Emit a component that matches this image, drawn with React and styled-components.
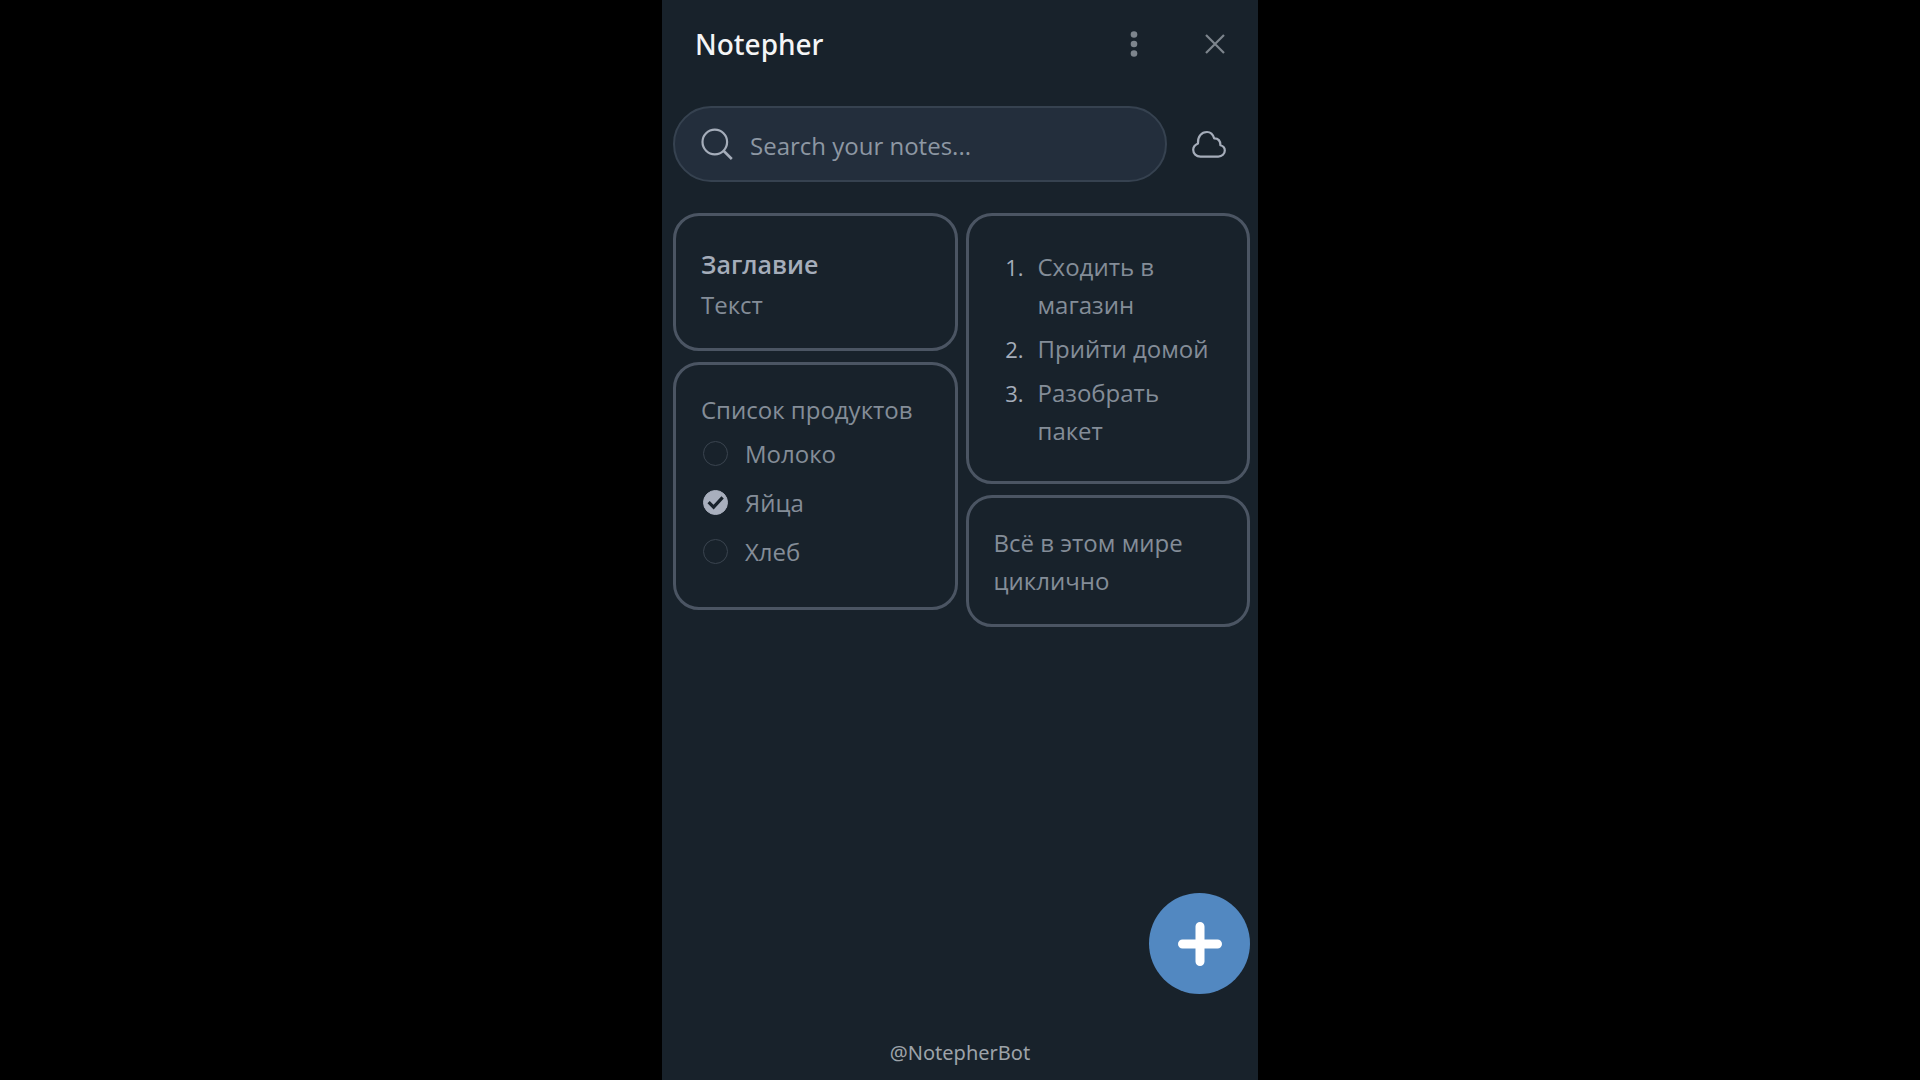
import { useState } from 'react';
import styled, { createGlobalStyle } from 'styled-components';

const GlobalStyle = createGlobalStyle`
  * {
    box-sizing: border-box;
  }

  body {
    margin: 0;
    background: #000;
    font-family: "Open Sans", "Noto Sans", sans-serif;
  }

  button {
    display: flex;
    justify-content: center;
    align-items: center;
    border: none;
    padding: 0;
    background: none;
    cursor: pointer;
  }
`;

const Panel = styled.div`
  display: flex;
  flex-direction: column;
  width: 100%;
  max-width: 596px;
  min-height: 100vh;
  margin: 0 auto;
  background: #18222b;
`;

const Header = styled.header`
  display: flex;
  align-items: center;
  height: 88px;
  padding: 0 21px 0 33px;
`;

const Title = styled.h1`
  flex: 1;
  margin: 0;
  font-family: "Noto Sans", sans-serif;
  font-size: 28px;
  font-weight: 500;
  color: #f4f5f6;
`;

const HeaderButton = styled.button`
  width: 44px;
  height: 44px;
  color: #7d858d;
  margin-left: ${(props) => (props.$spaced ? '37px' : '0')};
`;

const SearchRow = styled.div`
  display: flex;
  align-items: center;
  padding: 18px 27px 0 11px;
`;

const SearchBox = styled.label`
  display: flex;
  flex: 1;
  align-items: center;
  gap: 17px;
  height: 76px;
  padding: 0 26px;
  border: 2px solid #364250;
  border-radius: 38px;
  background: #232e3c;
  color: #a5adba;
`;

const SearchInput = styled.input`
  flex: 1;
  min-width: 0;
  padding: 2px 0 0;
  border: none;
  outline: none;
  background: none;
  font-family: inherit;
  font-size: 24px;
  color: #d5d9e0;

  &::placeholder {
    color: #8d97a3;
    opacity: 1;
  }
`;

const CloudButton = styled.button`
  width: 44px;
  height: 44px;
  margin-left: 20px;
  color: #a5adba;
`;

const Notes = styled.main`
  display: grid;
  grid-template-columns: 1fr 1fr;
  align-items: start;
  gap: 8px;
  padding: 31px 8px 0 11px;
`;

const Column = styled.div`
  display: flex;
  flex-direction: column;
  gap: 11px;
`;

const Card = styled.article`
  padding: 26px 25px 24px;
  border: 3px solid #4b5563;
  border-radius: 26px;
  font-size: 24px;
  line-height: 38px;
  color: #848d98;
`;

const CardTitle = styled.h2`
  margin: 0;
  font-size: 25px;
  font-weight: 600;
  line-height: 44px;
  color: #a5adba;
`;

const Text = styled.p`
  margin: 0;
`;

const Steps = styled.ol`
  display: flex;
  flex-direction: column;
  gap: 6px;
  margin: 0;
  padding: 6px 0 7px;
  list-style: none;
  counter-reset: step;
`;

const Step = styled.li`
  display: grid;
  grid-template-columns: 30px 1fr;
  column-gap: 14px;
  counter-increment: step;

  &::before {
    content: counter(step) ".";
    text-align: right;
    font-size: 22px;
    color: #a5adba;
  }
`;

const Checks = styled.ul`
  margin: 0 0 7px;
  padding: 0;
  list-style: none;
`;

const CheckLabel = styled.label`
  display: flex;
  align-items: center;
  gap: 17px;
  height: 49px;
  padding-left: 2px;
`;

const CheckMark = styled.span`
  display: grid;

  > * {
    grid-area: 1 / 1;
  }

  svg {
    pointer-events: none;
  }
`;

const Checkbox = styled.input`
  appearance: none;
  width: 25px;
  height: 25px;
  margin: 0;
  border: 1px solid #3a444f;
  border-radius: 50%;

  &:checked {
    border-color: #a8afbd;
    background: #a8afbd;
  }
`;

const AddButton = styled.button`
  align-self: flex-end;
  width: 101px;
  height: 101px;
  margin: auto 8px 0 0;

  && {
    border-radius: 50%;
    background: #5288c1;
  }
`;

const Footer = styled.footer`
  display: flex;
  justify-content: center;
  padding: 45px 0 13px;
  font-family: "Noto Sans", sans-serif;
  font-size: 20px;
  line-height: 28px;
  color: #9da3a9;
`;

const CheckItem = ({ children, defaultChecked = false }) => {
  const [checked, setChecked] = useState(defaultChecked);

  return (
    <li>
      <CheckLabel>
        <CheckMark>
          <Checkbox type="checkbox" checked={checked} onChange={() => setChecked(!checked)} />
          {checked && (
            <svg width="25" height="25" viewBox="0 0 25 25" fill="none" stroke="#18222b" strokeWidth="3.2">
              <path d="M5.6 12.2l5 5L19.6 7.4" />
            </svg>
          )}
        </CheckMark>
        {children}
      </CheckLabel>
    </li>
  );
};

export default function App() {
  return (
    <>
      <GlobalStyle />
      <Panel>
        <Header>
          <Title>Notepher</Title>
          <HeaderButton aria-label="Menu">
            <svg width="8" height="26" viewBox="0 0 8 26" fill="currentColor">
              <circle cx="4" cy="3.5" r="3.3" />
              <circle cx="4" cy="13" r="3.3" />
              <circle cx="4" cy="22.5" r="3.3" />
            </svg>
          </HeaderButton>
          <HeaderButton aria-label="Close" $spaced>
            <svg width="20" height="20" viewBox="0 0 20 20" fill="none" stroke="currentColor" strokeWidth="2.2">
              <path d="M1 1l18 18M19 1L1 19" />
            </svg>
          </HeaderButton>
        </Header>

        <SearchRow>
          <SearchBox>
            <svg width="32" height="32" viewBox="0 0 32 32" fill="none" stroke="currentColor" strokeWidth="2.2">
              <circle cx="13.8" cy="14" r="12.3" />
              <path d="M22.3 22.5l8.5 8.5" strokeWidth="2.6" />
            </svg>
            <SearchInput type="text" placeholder="Search your notes..." aria-label="Search your notes" />
          </SearchBox>
          <CloudButton aria-label="Cloud">
            <svg width="34" height="28" viewBox="0 0 34 28" fill="none" stroke="currentColor" strokeWidth="2.2" strokeLinejoin="round">
              <path d="M8.5 26.6C4.2 26.6 1.2 23.6 1.2 19.7C1.2 17 3 14.8 6 13.4C5.6 6.4 9.4 2 15 2C18.4 2 20.8 3.6 22.2 8.4C26.4 8.4 28.4 10.8 28.4 15.2C31.4 16 32.8 17.8 32.8 20.4C32.8 23.9 30 26.6 26.3 26.6Z" />
            </svg>
          </CloudButton>
        </SearchRow>

        <Notes>
          <Column>
            <Card>
              <CardTitle>Заглавие</CardTitle>
              <Text>Текст</Text>
            </Card>
            <Card>
              <Text>Список продуктов</Text>
              <Checks>
                <CheckItem>Молоко</CheckItem>
                <CheckItem defaultChecked>Яйца</CheckItem>
                <CheckItem>Хлеб</CheckItem>
              </Checks>
            </Card>
          </Column>
          <Column>
            <Card>
              <Steps>
                <Step>Сходить в магазин</Step>
                <Step>Прийти домой</Step>
                <Step>Разобрать пакет</Step>
              </Steps>
            </Card>
            <Card>
              <Text>Всё в этом мире циклично</Text>
            </Card>
          </Column>
        </Notes>

        <AddButton aria-label="Add note">
          <svg width="44" height="44" viewBox="0 0 44 44" fill="none" stroke="#fff" strokeWidth="9" strokeLinecap="round">
            <path d="M22 4.5v35M4.5 22h35" />
          </svg>
        </AddButton>
        <Footer>@NotepherBot</Footer>
      </Panel>
    </>
  );
}
